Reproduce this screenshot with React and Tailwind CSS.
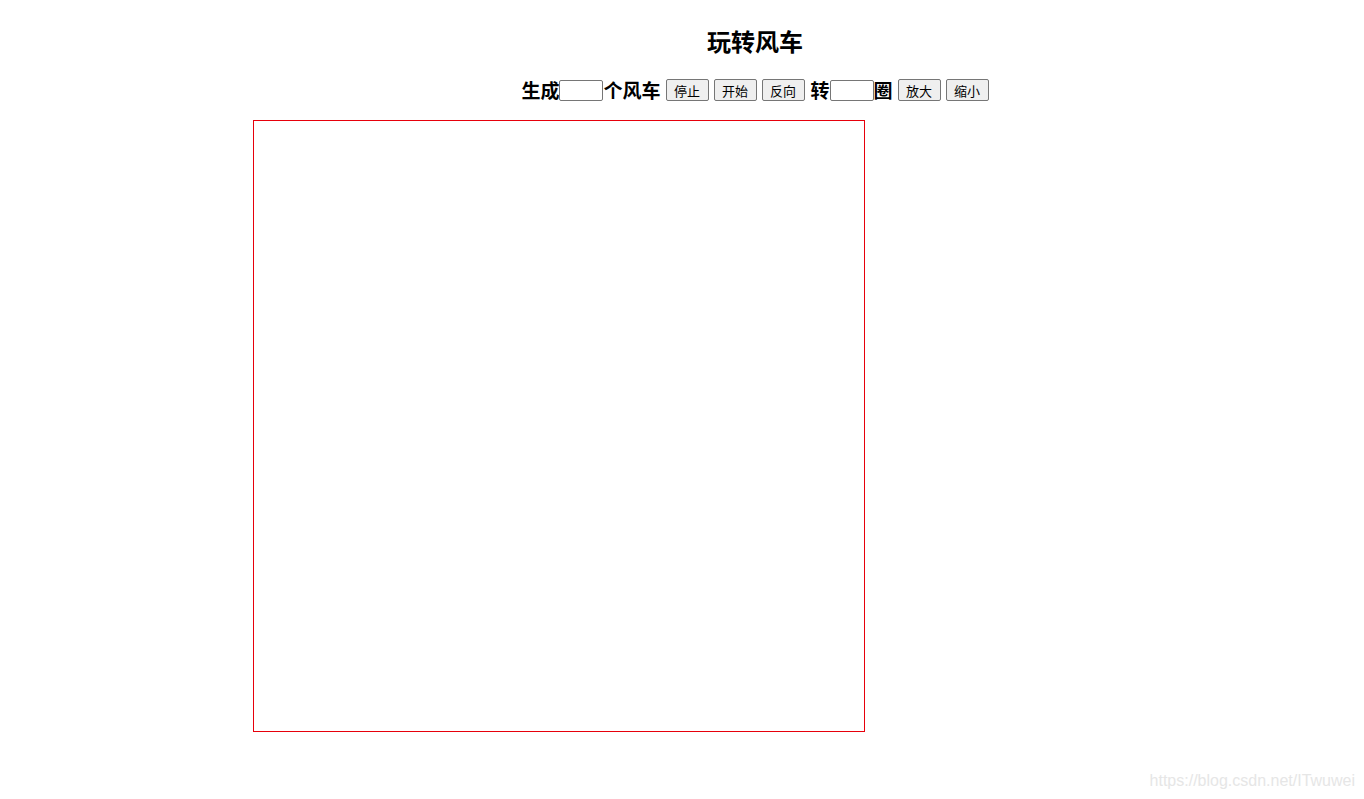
const cjk = "font-['Microsoft_YaHei','Noto_Sans_CJK_SC',sans-serif]";

const Btn = ({ children, className = "" }) => (
	<button
		className={`h-[22px] w-[43px] border border-[#767676] rounded-[2px] bg-[#efefef] text-[13px] font-normal leading-none text-black ${cjk} ${className}`}
	>
		{children}
	</button>
);

const NumInput = ({ className = "" }) => (
	<input
		type="text"
		className={`h-[21px] w-[44px] border border-[#767676] rounded-[2px] bg-white outline-none ${className}`}
	/>
);

export default function App() {
	return (
		<div className={`relative min-h-[799px] overflow-hidden bg-white text-black ${cjk}`}>
			<div className="w-[1510px]">
				{/* Title */}
				<h2 className="pt-[20px] h-[62px] text-center text-[24px] font-bold leading-[42px]">
					玩转风车
				</h2>

				{/* Controls */}
				<div className="mt-[8px] flex h-[40px] items-center justify-center text-[19px] font-bold">
					<span>生成</span>
					<NumInput />
					<span>个风车</span>
					<Btn className="ml-[5px]">停止</Btn>
					<Btn className="ml-[5px]">开始</Btn>
					<Btn className="ml-[5px] w-[42px]">反向</Btn>
					<span className="ml-[6px]">转</span>
					<NumInput />
					<span>圈</span>
					<Btn className="ml-[5px]">放大</Btn>
					<Btn className="ml-[5px]">缩小</Btn>
				</div>

				{/* Canvas */}
				<div className="mt-[10px] ml-[253px] h-[612px] w-[612px] border border-red-600" />
			</div>

			<span className="absolute right-[9px] top-[769px] text-[16px] text-[#e6e6e6] font-['Liberation_Sans',sans-serif]">
				https://blog.csdn.net/ITwuwei
			</span>
		</div>
	);
}
